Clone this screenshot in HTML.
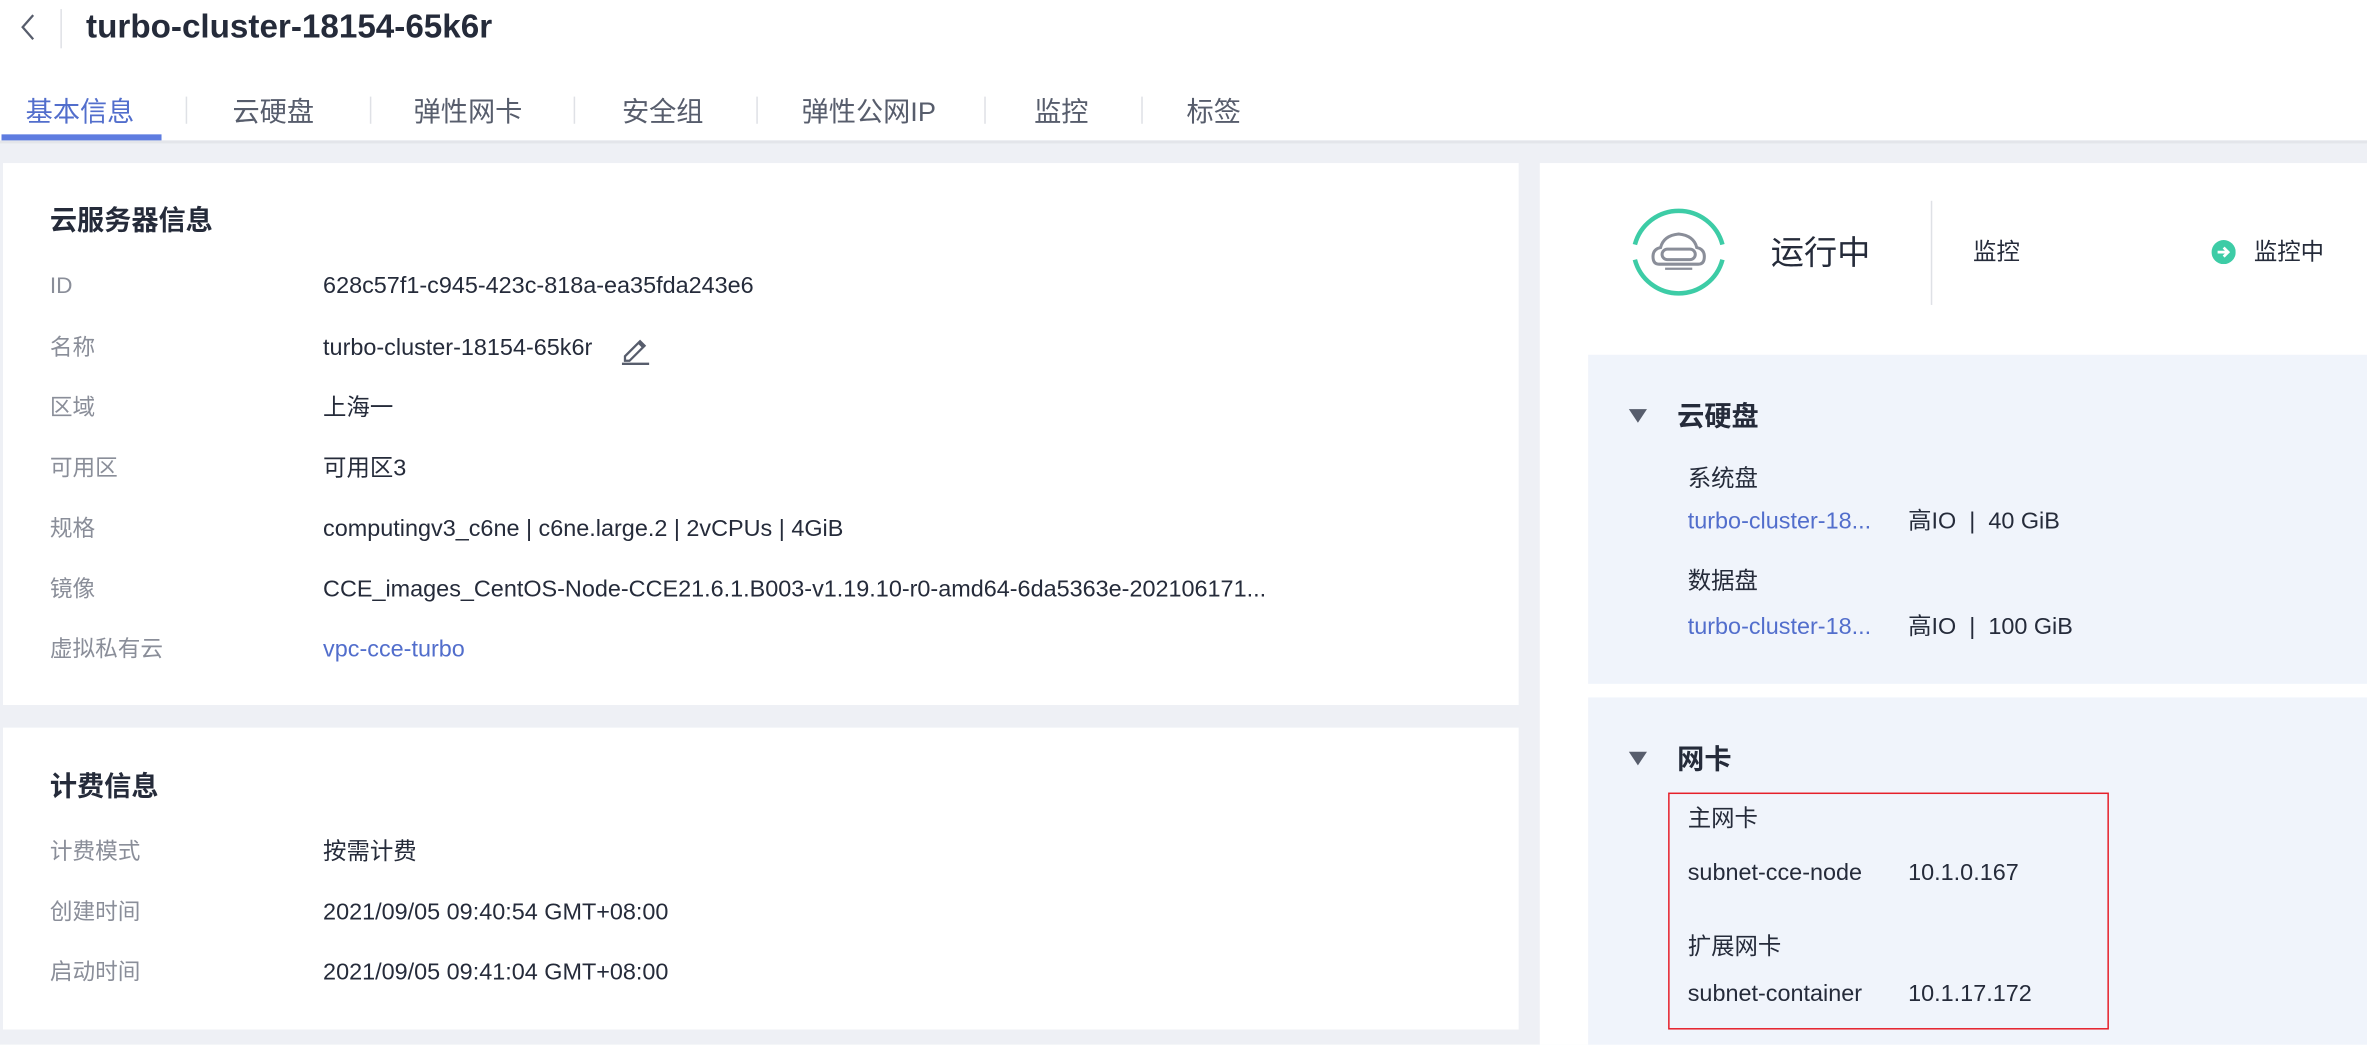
<!DOCTYPE html>
<html><head><meta charset="utf-8"><style>
html,body{margin:0;padding:0;width:2367px;height:1045px;overflow:hidden;background:#fff}
#w{position:absolute;left:0;top:0;width:1568px;height:692px;transform:scale(1.5096);transform-origin:0 0;font-family:"Liberation Sans","Noto Sans CJK SC",sans-serif;color:#252b3a;background:#fff}
.a{position:absolute;white-space:nowrap;line-height:1}
.t{font-size:18px;color:#575d6c}
.h{font-size:18px;font-weight:bold;color:#252b3a}
.l{font-size:15px;color:#8a8e99}
.v{font-size:15.5px;color:#252b3a}
.lk{color:#526ecc}
</style></head><body><div id="w">
<svg class="a" style="left:12px;top:8px" width="14" height="20" viewBox="0 0 14 20"><path d="M10 2 L3 10 L10 18" fill="none" stroke="#575d6c" stroke-width="1.5"/></svg>
<div class="a" style="left:40px;top:6px;width:1px;height:26px;background:#dfe1e6"></div>
<div class="a" style="left:57px;top:7px;font-size:22px;font-weight:bold;color:#252b3a">turbo-cluster-18154-65k6r</div>
<div class="a t" style="left:17px;top:65px;color:#526ecc">基本信息</div>
<div class="a t" style="left:154px;top:65px">云硬盘</div>
<div class="a t" style="left:274px;top:65px">弹性网卡</div>
<div class="a t" style="left:412px;top:65px">安全组</div>
<div class="a t" style="left:531px;top:65px">弹性公网IP</div>
<div class="a t" style="left:685px;top:65px">监控</div>
<div class="a t" style="left:786px;top:65px">标签</div>
<div class="a" style="left:123px;top:64px;width:1px;height:18px;background:#dfe1e6"></div>
<div class="a" style="left:245px;top:64px;width:1px;height:18px;background:#dfe1e6"></div>
<div class="a" style="left:380px;top:64px;width:1px;height:18px;background:#dfe1e6"></div>
<div class="a" style="left:501px;top:64px;width:1px;height:18px;background:#dfe1e6"></div>
<div class="a" style="left:652px;top:64px;width:1px;height:18px;background:#dfe1e6"></div>
<div class="a" style="left:756px;top:64px;width:1px;height:18px;background:#dfe1e6"></div>
<div class="a" style="left:0;top:93px;width:1568px;height:599px;background:#eef0f5"></div>
<div class="a" style="left:0;top:93px;width:1568px;height:2px;background:#e3e5ea"></div>
<div class="a" style="left:1px;top:89px;width:106px;height:4px;background:#5e7ce0"></div>
<!-- card1 -->
<div class="a" style="left:2px;top:108px;width:1004px;height:359px;background:#fff"></div>
<div class="a h" style="left:33px;top:137px">云服务器信息</div>
<div class="a l" style="left:33px;top:182px">ID</div><div class="a v" style="left:214px;top:182px">628c57f1-c945-423c-818a-ea35fda243e6</div>
<div class="a l" style="left:33px;top:223px">名称</div><div class="a v" style="left:214px;top:223px">turbo-cluster-18154-65k6r</div>
<svg class="a" style="left:410px;top:220px" width="22" height="22" viewBox="0 0 22 22"><path d="M4 16 L4 19 L7 19 L17 9 L14 6 Z M13 7 L16 10" fill="none" stroke="#575d6c" stroke-width="1.5"/><path d="M2 21 H20" stroke="#575d6c" stroke-width="1.5"/></svg>
<div class="a l" style="left:33px;top:263px">区域</div><div class="a v" style="left:214px;top:263px">上海一</div>
<div class="a l" style="left:33px;top:303px">可用区</div><div class="a v" style="left:214px;top:303px">可用区3</div>
<div class="a l" style="left:33px;top:343px">规格</div><div class="a v" style="left:214px;top:343px">computingv3_c6ne | c6ne.large.2 | 2vCPUs | 4GiB</div>
<div class="a l" style="left:33px;top:383px">镜像</div><div class="a v" style="left:214px;top:383px">CCE_images_CentOS-Node-CCE21.6.1.B003-v1.19.10-r0-amd64-6da5363e-202106171...</div>
<div class="a l" style="left:33px;top:423px">虚拟私有云</div><div class="a v lk" style="left:214px;top:423px">vpc-cce-turbo</div>
<!-- card2 -->
<div class="a" style="left:2px;top:482px;width:1004px;height:200px;background:#fff"></div>
<div class="a h" style="left:33px;top:512px">计费信息</div>
<div class="a l" style="left:33px;top:557px">计费模式</div><div class="a v" style="left:214px;top:557px">按需计费</div>
<div class="a l" style="left:33px;top:597px">创建时间</div><div class="a v" style="left:214px;top:597px">2021/09/05 09:40:54 GMT+08:00</div>
<div class="a l" style="left:33px;top:637px">启动时间</div><div class="a v" style="left:214px;top:637px">2021/09/05 09:41:04 GMT+08:00</div>
<!-- right -->
<div class="a" style="left:1020px;top:108px;width:548px;height:584px;background:#fff"></div>
<svg class="a" style="left:1080px;top:135px" width="64" height="64" viewBox="0 0 64 64"><path d="M3 27 A30 30 0 0 1 61 27 M61 37 A30 30 0 0 1 3 37" fill="none" stroke="#3dcca6" stroke-width="3"/><path d="M19 40 Q15 40 15 35 Q15 30 20 29 Q22 21 32 20 Q42 21 44 29 Q49 30 49 35 Q49 40 45 40 Z" fill="none" stroke="#8a8e99" stroke-width="2"/><rect x="21" y="30" width="22" height="7" rx="3.5" fill="none" stroke="#8a8e99" stroke-width="2"/><path d="M23 43 H41" stroke="#8a8e99" stroke-width="1.5"/></svg>
<div class="a" style="left:1173px;top:157px;font-size:22px;color:#252b3a">运行中</div>
<div class="a" style="left:1279px;top:133px;width:1px;height:69px;background:#dfe1e6"></div>
<div class="a v" style="left:1307px;top:160px">监控</div>
<svg class="a" style="left:1465px;top:159px" width="16" height="16" viewBox="0 0 16 16"><circle cx="8" cy="8" r="8" fill="#3dcca6"/><path d="M4 8 H11 M8 5 L11 8 L8 11" fill="none" stroke="#fff" stroke-width="1.8"/></svg>
<div class="a v" style="left:1493px;top:160px">监控中</div>
<div class="a" style="left:1052px;top:235px;width:516px;height:218px;background:#f0f4fb"></div>
<div class="a" style="left:1079px;top:271px;width:0;height:0;border-left:6px solid transparent;border-right:6px solid transparent;border-top:9px solid #575d6c"></div>
<div class="a h" style="left:1111px;top:267px">云硬盘</div>
<div class="a v" style="left:1118px;top:310px">系统盘</div>
<div class="a v" style="left:1118px;top:338px"><span class="lk">turbo-cluster-18...</span></div><div class="a v" style="left:1264px;top:338px">高IO &nbsp;| &nbsp;40 GiB</div>
<div class="a v" style="left:1118px;top:378px">数据盘</div>
<div class="a v" style="left:1118px;top:408px"><span class="lk">turbo-cluster-18...</span></div><div class="a v" style="left:1264px;top:408px">高IO &nbsp;| &nbsp;100 GiB</div>
<div class="a" style="left:1052px;top:462px;width:516px;height:230px;background:#f0f4fb"></div>
<div class="a" style="left:1079px;top:498px;width:0;height:0;border-left:6px solid transparent;border-right:6px solid transparent;border-top:9px solid #575d6c"></div>
<div class="a h" style="left:1111px;top:494px">网卡</div>
<div class="a" style="left:1105px;top:525px;width:290px;height:155px;border:1px solid #e6202a"></div>
<div class="a v" style="left:1118px;top:535px">主网卡</div>
<div class="a v" style="left:1118px;top:571px">subnet-cce-node</div><div class="a v" style="left:1264px;top:571px">10.1.0.167</div>
<div class="a v" style="left:1118px;top:620px">扩展网卡</div>
<div class="a v" style="left:1118px;top:651px">subnet-container</div><div class="a v" style="left:1264px;top:651px">10.1.17.172</div>
</div></body></html>
